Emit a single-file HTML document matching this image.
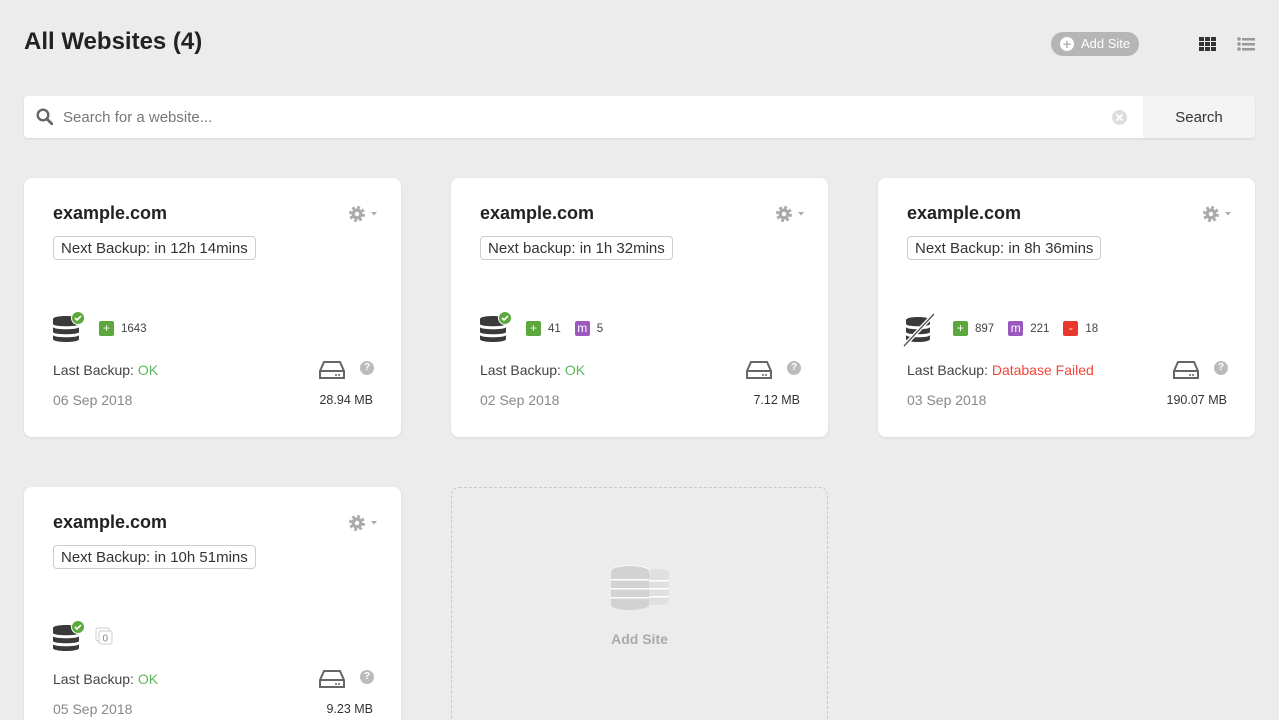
<!DOCTYPE html>
<html><head><meta charset="utf-8"><style>
*{box-sizing:border-box;margin:0;padding:0}
html,body{width:1279px;height:720px;overflow:hidden}
body{background:#ececec;font-family:"Liberation Sans",sans-serif;color:#333;position:relative}
.abs{position:absolute}
h1{position:absolute;left:24px;top:28px;font-size:24px;font-weight:bold;color:#222}
.addbtn{left:1051px;top:32px;width:88px;height:24px;border-radius:12px;background:#b5b5b5;color:#fff;font-size:13px;line-height:24px;padding-left:30px}
.addbtn:before{content:"+";position:absolute;left:9px;top:5px;width:14px;height:14px;border-radius:50%;background:#fff;color:#b5b5b5;font-weight:bold;font-size:14px;line-height:14px;text-align:center}
.search{left:24px;top:96px;width:1231px;height:42px;background:#fff;border-radius:4px;box-shadow:0 1px 2px rgba(0,0,0,.1)}
.search .ph{position:absolute;left:39px;top:13px;font-size:15px;color:#777}
.search .btn{position:absolute;right:0;top:0;width:112px;height:42px;background:#f3f3f3;border-radius:0 4px 4px 0;font-size:15px;text-align:center;line-height:43px;color:#333}
.card{position:absolute;width:377px;height:259px;background:#fff;border-radius:8px;box-shadow:0 1px 3px rgba(0,0,0,.08)}
.card .t{position:absolute;left:29px;top:25px;font-size:18px;font-weight:bold;color:#222}
.card .nb{position:absolute;left:29px;top:58px;height:24px;border:1px solid #ccc;border-radius:4px;padding:0 7px;font-size:15px;line-height:23px;color:#333}
.card .gear{position:absolute;left:323px;top:27px}
.card .db{position:absolute;left:29px;top:134px}
.card .lb{position:absolute;left:29px;top:184px;font-size:14px;color:#444}
.card .dt{position:absolute;left:29px;top:214px;font-size:14px;color:#888}
.card .sz{position:absolute;right:28px;top:215px;font-size:12.5px;color:#333}
.card .hd{position:absolute;left:295px;top:181px}
.card .q{position:absolute;left:336px;top:183px;width:14px;height:14px;border-radius:50%;background:#bbb;color:#fff;font-size:10px;font-weight:bold;text-align:center;line-height:14px}
.ok{color:#5cb85c}.fail{color:#f0463a}
.badges{position:absolute;left:75px;top:143px;font-size:11.5px;color:#444;display:flex;align-items:center}
.bd{display:inline-block;width:15px;height:15px;border-radius:2px;color:#fff;font-size:12px;line-height:15px;text-align:center;margin-right:7px}
.g{background:#5ca83d}.m{background:#9b59c0}.r{background:#e9382b}
.badges span.n{margin-right:14px}
.empty{position:absolute;left:451px;top:487px;width:377px;height:260px;border:1px dashed #c8c8c8;border-radius:8px}
</style></head><body>
<h1>All Websites (4)</h1>
<div class="abs addbtn">Add Site</div>
<svg class="abs" style="left:1199px;top:37px" width="18" height="15"><g fill="#333"><rect x="0" y="0" width="5" height="4"/><rect x="6" y="0" width="5" height="4"/><rect x="12" y="0" width="5" height="4"/><rect x="0" y="5" width="5" height="4"/><rect x="6" y="5" width="5" height="4"/><rect x="12" y="5" width="5" height="4"/><rect x="0" y="10" width="5" height="4"/><rect x="6" y="10" width="5" height="4"/><rect x="12" y="10" width="5" height="4"/></g></svg>
<svg class="abs" style="left:1237px;top:37px" width="18" height="15"><g fill="#999"><circle cx="2" cy="2" r="1.8"/><circle cx="2" cy="7" r="1.8"/><circle cx="2" cy="12" r="1.8"/><rect x="5" y="1" width="13" height="2.5"/><rect x="5" y="6" width="13" height="2.5"/><rect x="5" y="11" width="13" height="2.5"/></g></svg>
<div class="abs search">
<svg style="position:absolute;left:12px;top:12px" width="17" height="17"><circle cx="7" cy="7" r="5.3" fill="none" stroke="#666" stroke-width="2.4"/><line x1="11" y1="11" x2="16" y2="16" stroke="#666" stroke-width="2.8" stroke-linecap="round"/></svg>
<span class="ph">Search for a website...</span>
<svg style="position:absolute;left:1087px;top:13px" width="17" height="17"><circle cx="8.5" cy="8.5" r="7.5" fill="#ddd"/><path d="M5.5 5.5l6 6M11.5 5.5l-6 6" stroke="#fff" stroke-width="1.8"/></svg>
<div class="btn">Search</div>
</div>

<div class="card" style="left:24px;top:178px">
<div class="t">example.com</div><div class="nb">Next Backup: in 12h 14mins</div>
<svg class="gear" width="34" height="18"><circle cx="10" cy="9" r="6.5" fill="none" stroke="#aaa" stroke-width="3" stroke-dasharray="2.8 2.3"/><circle cx="10" cy="9" r="5.5" fill="#aaa"/><circle cx="10" cy="9" r="2.2" fill="#fff"/><path d="M24 7h6l-3 3.5z" fill="#aaa"/></svg>
<svg class="db" width="32" height="34"><g fill="#3a3a3a"><path d="M0 7c0-4 26-4 26 0v5c0 3-26 3-26 0z"/><path d="M0 15c0 3 26 3 26 0v5c0 3-26 3-26 0z"/><path d="M0 23c0 3 26 3 26 0v4c0 4-26 4-26 0z"/></g><circle cx="25" cy="6" r="7" fill="#fff"/><circle cx="25" cy="6" r="6" fill="#5ca83d"/><path d="M22 6l2 2 4-4" stroke="#fff" stroke-width="1.6" fill="none"/></svg>
<div class="badges"><span class="bd g">+</span><span class="n">1643</span></div>
<div class="lb">Last Backup: <span class="ok">OK</span></div><div class="dt">06 Sep 2018</div><div class="sz">28.94 MB</div>
<svg class="hd" width="26" height="22"><path d="M5 3h16l4 9v7H1v-7z" fill="none" stroke="#666" stroke-width="2"/><line x1="1" y1="12" x2="25" y2="12" stroke="#666" stroke-width="2"/><circle cx="17" cy="16" r="1" fill="#666"/><circle cx="20" cy="16" r="1" fill="#666"/></svg>
<div class="q">?</div>
</div>

<div class="card" style="left:451px;top:178px">
<div class="t">example.com</div><div class="nb">Next backup: in 1h 32mins</div>
<svg class="gear" width="34" height="18"><circle cx="10" cy="9" r="6.5" fill="none" stroke="#aaa" stroke-width="3" stroke-dasharray="2.8 2.3"/><circle cx="10" cy="9" r="5.5" fill="#aaa"/><circle cx="10" cy="9" r="2.2" fill="#fff"/><path d="M24 7h6l-3 3.5z" fill="#aaa"/></svg>
<svg class="db" width="32" height="34"><g fill="#3a3a3a"><path d="M0 7c0-4 26-4 26 0v5c0 3-26 3-26 0z"/><path d="M0 15c0 3 26 3 26 0v5c0 3-26 3-26 0z"/><path d="M0 23c0 3 26 3 26 0v4c0 4-26 4-26 0z"/></g><circle cx="25" cy="6" r="7" fill="#fff"/><circle cx="25" cy="6" r="6" fill="#5ca83d"/><path d="M22 6l2 2 4-4" stroke="#fff" stroke-width="1.6" fill="none"/></svg>
<div class="badges"><span class="bd g">+</span><span class="n">41</span><span class="bd m">m</span><span class="n">5</span></div>
<div class="lb">Last Backup: <span class="ok">OK</span></div><div class="dt">02 Sep 2018</div><div class="sz">7.12 MB</div>
<svg class="hd" width="26" height="22"><path d="M5 3h16l4 9v7H1v-7z" fill="none" stroke="#666" stroke-width="2"/><line x1="1" y1="12" x2="25" y2="12" stroke="#666" stroke-width="2"/><circle cx="17" cy="16" r="1" fill="#666"/><circle cx="20" cy="16" r="1" fill="#666"/></svg>
<div class="q">?</div>
</div>

<div class="card" style="left:878px;top:178px">
<div class="t">example.com</div><div class="nb">Next Backup: in 8h 36mins</div>
<svg class="gear" width="34" height="18"><circle cx="10" cy="9" r="6.5" fill="none" stroke="#aaa" stroke-width="3" stroke-dasharray="2.8 2.3"/><circle cx="10" cy="9" r="5.5" fill="#aaa"/><circle cx="10" cy="9" r="2.2" fill="#fff"/><path d="M24 7h6l-3 3.5z" fill="#aaa"/></svg>
<svg class="db" width="34" height="36" style="left:24px"><g fill="#3a3a3a"><path d="M4 8c0-4 24-4 24 0v4c0 3-24 3-24 0z"/><path d="M4 15c0 3 24 3 24 0v5c0 3-24 3-24 0z"/><path d="M4 23c0 3 24 3 24 0v4c0 4-24 4-24 0z"/></g><line x1="32" y1="2" x2="2" y2="34" stroke="#fff" stroke-width="4"/><line x1="32" y1="2" x2="2" y2="34" stroke="#555" stroke-width="1.3"/></svg>
<div class="badges"><span class="bd g">+</span><span class="n">897</span><span class="bd m">m</span><span class="n">221</span><span class="bd r">-</span><span class="n">18</span></div>
<div class="lb">Last Backup: <span class="fail">Database Failed</span></div><div class="dt">03 Sep 2018</div><div class="sz">190.07 MB</div>
<svg class="hd" width="26" height="22"><path d="M5 3h16l4 9v7H1v-7z" fill="none" stroke="#666" stroke-width="2"/><line x1="1" y1="12" x2="25" y2="12" stroke="#666" stroke-width="2"/><circle cx="17" cy="16" r="1" fill="#666"/><circle cx="20" cy="16" r="1" fill="#666"/></svg>
<div class="q">?</div>
</div>

<div class="card" style="left:24px;top:487px">
<div class="t">example.com</div><div class="nb">Next Backup: in 10h 51mins</div>
<svg class="gear" width="34" height="18"><circle cx="10" cy="9" r="6.5" fill="none" stroke="#aaa" stroke-width="3" stroke-dasharray="2.8 2.3"/><circle cx="10" cy="9" r="5.5" fill="#aaa"/><circle cx="10" cy="9" r="2.2" fill="#fff"/><path d="M24 7h6l-3 3.5z" fill="#aaa"/></svg>
<svg class="db" width="32" height="34"><g fill="#3a3a3a"><path d="M0 7c0-4 26-4 26 0v5c0 3-26 3-26 0z"/><path d="M0 15c0 3 26 3 26 0v5c0 3-26 3-26 0z"/><path d="M0 23c0 3 26 3 26 0v4c0 4-26 4-26 0z"/></g><circle cx="25" cy="6" r="7" fill="#fff"/><circle cx="25" cy="6" r="6" fill="#5ca83d"/><path d="M22 6l2 2 4-4" stroke="#fff" stroke-width="1.6" fill="none"/></svg>
<svg style="position:absolute;left:71px;top:140px" width="20" height="20"><rect x="1" y="1" width="13" height="13" rx="2" fill="none" stroke="#ccc"/><rect x="4" y="4" width="13" height="13" rx="2" fill="#fff" stroke="#ccc"/><text x="7.5" y="14.5" font-size="10" fill="#888" font-family="Liberation Sans">0</text></svg>
<div class="lb">Last Backup: <span class="ok">OK</span></div><div class="dt">05 Sep 2018</div><div class="sz">9.23 MB</div>
<svg class="hd" width="26" height="22"><path d="M5 3h16l4 9v7H1v-7z" fill="none" stroke="#666" stroke-width="2"/><line x1="1" y1="12" x2="25" y2="12" stroke="#666" stroke-width="2"/><circle cx="17" cy="16" r="1" fill="#666"/><circle cx="20" cy="16" r="1" fill="#666"/></svg>
<div class="q">?</div>
</div>

<div class="empty">
<svg style="position:absolute;left:158px;top:77px" width="62" height="48"><g fill="#e0e0e0"><ellipse cx="46" cy="8" rx="13" ry="4"/><rect x="33" y="8" width="26" height="28"/><ellipse cx="46" cy="36" rx="13" ry="4"/></g><g fill="#fff"><rect x="33" y="15" width="26" height="1.5"/><rect x="33" y="23" width="26" height="1.5"/><rect x="33" y="31" width="26" height="1.5"/></g><g fill="#d2d2d2" stroke="#fff" stroke-width="1.5"><ellipse cx="20" cy="6" rx="19" ry="5"/><rect x="1" y="6" width="38" height="34" stroke="none"/><ellipse cx="20" cy="40" rx="19" ry="5" stroke="none"/></g><g fill="#fff"><rect x="1" y="14" width="38" height="1.5"/><rect x="1" y="23" width="38" height="1.5"/><rect x="1" y="32" width="38" height="1.5"/></g><ellipse cx="20" cy="6" rx="19" ry="5" fill="#d2d2d2"/></svg>
<div style="position:absolute;left:0;width:375px;top:143px;text-align:center;color:#aaa;font-size:14px;font-weight:bold">Add Site</div>
</div>
</body></html>
